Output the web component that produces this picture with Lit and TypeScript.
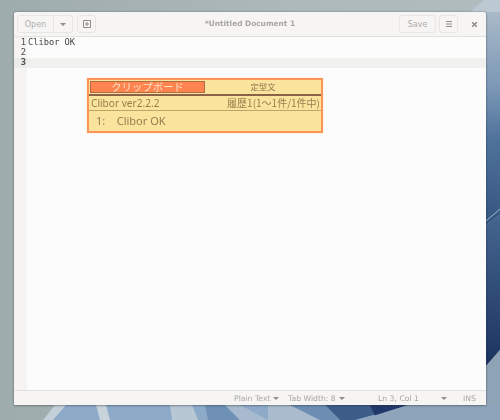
import { LitElement, html, css } from "lit";
import { customElement } from "lit/decorators.js";

@customElement("app-root")
export class AppRoot extends LitElement {
  static styles = css`
    :host { display: block; width: 500px; height: 420px; position: relative; overflow: hidden;
      font-family: "DejaVu Sans", sans-serif; background: #a3b1b2; }
    .wall { position: absolute; inset: 0; width: 500px; height: 420px; filter: blur(.6px); }
    .desk { position: relative; box-sizing: border-box; width: 500px; height: 420px; padding: 12px 14px 15px 14px; }
    .win { height: 393px; width: 472px; background: #f6f5f4; display: flex; flex-direction: column; position: relative;
      border-radius: 2px 2px 0 0; box-shadow: 0 0 2px rgba(40,50,60,.5), 0 1px 2px rgba(40,50,60,.3); }
    .head { height: 24px; flex: none; display: flex; align-items: center; padding: 0 3px; border-bottom: 1px solid #e3e1de; position: relative; filter: blur(.3px); }
    .btn { height: 18px; box-sizing: border-box; border: 1px solid #e8e6e3; border-radius: 3px; display: flex; align-items: center; justify-content: center;
      font-size: 8px; color: #adadab; background: #f6f5f4; }
    .open { width: 37px; border-radius: 3px 0 0 3px; }
    .drop { width: 19px; border-left: none; border-radius: 0 3px 3px 0; margin-right: 4px; }
    .add { width: 19px; }
    .tri { width: 0; height: 0; border-left: 3px solid transparent; border-right: 3px solid transparent; border-top: 3px solid #8e8e8c; }
    .title { position: absolute; left: 0; right: 0; text-align: center; font-size: 7.4px; line-height: 10px; font-weight: 700; color: #a6a6a4; }
    .spacer { flex: 1; }
    .save { width: 37px; margin-right: 3px; }
    .menu { width: 19px; }
    .close { width: 12px; margin: 0 3px 0 10px; display: flex; justify-content: center; }
    .body { flex: 1; display: flex; background: #fcfcfc; position: relative; min-height: 0; }
    .gutter { width: 13px; flex: none; background: #f5f4f3; box-sizing: border-box; padding-top: 1px; text-align: right; filter: blur(.2px); }
    .gutter div { height: 10px; font: 8.7px/9px "DejaVu Sans Mono", monospace; color: #4a4a4a; padding-right: 1px; }
    .gutter .cur { font-weight: 700; background: #ececea; }
    .text { flex: 1; padding-top: 1px; font: 8.7px/9px "DejaVu Sans Mono", monospace; color: #444; }
    .text div { height: 10px; padding-left: 1px; filter: blur(.2px); }
    .text .cur { background: #f0f0ef; filter: none; }
    .foot { height: 15px; box-sizing: border-box; flex: none; border-top: 1px solid #e3e1de; display: flex; align-items: center; font-size: 7.7px; color: #a6a6a4; position: relative; padding-left: 220px; filter: blur(.25px); }
    .foot .item { display: flex; align-items: center; gap: 3px; white-space: nowrap; }
    .clibor { position: absolute; left: 73px; top: 41px; width: 236px; height: 55px; box-sizing: border-box; border: 2px solid #fd9558; background: #fae39d;
      display: flex; flex-direction: column; font-family: "Noto Sans CJK JP", sans-serif; color: #94804f; box-shadow: 0 0 1px #fdc9a0; filter: blur(.3px); }
    .tabs { height: 14px; flex: none; display: flex; border-bottom: 2px solid #8a6248; box-sizing: content-box; }
    .tab { flex: 1; display: flex; align-items: center; justify-content: center; font-size: 8.4px; line-height: 1; color: #8c784f; padding-bottom: 2px; }
    .tab.on { flex: none; width: 115px; height: 12px; margin: 1px 0 0 1px; padding: 0; background: #ff8450; border: 1px solid #b06a44; box-sizing: border-box; color: #fbe3c4; font-size: 10.4px; }
    .info { height: 14px; flex: none; display: flex; justify-content: space-between; align-items: center; padding: 0 1px 0 2px; font-size: 10.1px; line-height: 1; border-bottom: 1px solid #bfa468; font-family: "Noto Sans", "Noto Sans CJK JP", sans-serif; }
    .info span:last-child { font-family: "Noto Sans CJK JP", sans-serif; font-size: 10px; }
    .row { flex: 1; padding: 0 0 1px 7px; display: flex; align-items: center; font-size: 11px; line-height: 1; font-family: "Noto Sans", sans-serif; white-space: pre; }
  `;

  render() {
    return html`
      <svg class="wall" viewBox="0 0 500 420">
        <defs>
          <linearGradient id="g" x1="0" y1="0" x2="1" y2="0">
            <stop offset="0" stop-color="#9facad" />
            <stop offset=".6" stop-color="#adb9ba" />
            <stop offset="1" stop-color="#b0bcbe" />
          </linearGradient>
          <linearGradient id="r" x1="0" y1="0" x2="0" y2="1">
            <stop offset="0" stop-color="#a9bac8" />
            <stop offset=".35" stop-color="#7c98b6" />
            <stop offset=".6" stop-color="#4f729b" />
            <stop offset="1" stop-color="#34557f" />
          </linearGradient>
          <linearGradient id="d" x1="0" y1="0" x2="0" y2="1">
            <stop offset="0" stop-color="#45658f" />
            <stop offset="1" stop-color="#1b345f" />
          </linearGradient>
        </defs>
        <rect width="500" height="420" fill="url(#g)" />
        <path d="M470 12 L484 0 H500 V12 Z" fill="#bcc8d2" />
        <path d="M486 12 H500 V215 L486 225 Z" fill="url(#r)" />
        <path d="M486 225 L500 215 V350 L486 366 Z" fill="url(#d)" />
        <path d="M486 366 L500 350 V420 H486 Z" fill="#8fa3b6" />
        <path d="M486 221 L500 209" stroke="#a7bbce" stroke-width="1" />
        <path d="M60 405 H500 V420 H50 Z" fill="#8dabc9" />
        <path d="M43 420 L55 405 H66 L53 420 Z" fill="#c3d0d9" />
        <path d="M96 405 H106 L110 420 H100 Z" fill="#c8d3dc" />
        <path d="M170 405 H192 L198 420 H172 Z" fill="#b7c7d4" />
        <path d="M205 405 H225 L240 420 H208 Z" fill="#6f91b5" />
        <path d="M225 405 H240 L268 420 H240 Z" fill="#a8bbce" />
        <path d="M268 405 H290 L320 420 H268 Z" fill="#a9bbcd" />
        <path d="M290 405 H325 L340 420 H320 Z" fill="#6d8eb2" />
        <path d="M325 405 H410 L355 420 H340 Z" fill="#3c5d88" />
        <path d="M370 405 H408 L375 416 Z" fill="#20396a" />
        <path d="M408 405 H500 V420 H360 Z" fill="#8ea4ba" />
      </svg>
      <div class="desk">
        <div class="win">
          <div class="head">
            <div class="btn open">Open</div>
            <div class="btn drop"><span class="tri"></span></div>
            <div class="btn add">
              <svg width="10" height="10" viewBox="0 0 10 10" fill="none" stroke="#8e8e8c" stroke-width="1">
                <path d="M1.5 1.5h7v7h-7z M5 3v4 M3 5h4" />
              </svg>
            </div>
            <div class="title">*Untitled Document 1</div>
            <div class="spacer"></div>
            <div class="btn save">Save</div>
            <div class="btn menu">
              <svg width="8" height="8" viewBox="0 0 8 8" stroke="#8e8e8c" stroke-width="1"><path d="M1 1.5h6M1 4h6M1 6.5h6" /></svg>
            </div>
            <div class="close">
              <svg width="7" height="7" viewBox="0 0 7 7" stroke="#858583" stroke-width="1.3"><path d="M1.2 1.2l4.6 4.6M5.8 1.2L1.2 5.8" /></svg>
            </div>
          </div>
          <div class="body">
            <div class="gutter"><div>1</div><div>2</div><div class="cur">3</div></div>
            <div class="text"><div>Clibor OK</div><div></div><div class="cur"></div></div>
            <div class="clibor">
              <div class="tabs">
                <div class="tab on">クリップボード</div>
                <div class="tab">定型文</div>
              </div>
              <div class="info"><span>Clibor ver2.2.2</span><span>履歴1(1～1件/1件中)</span></div>
              <div class="row">1:    Clibor OK</div>
            </div>
          </div>
          <div class="foot">
            <div class="item" style="width:54px">Plain Text <span class="tri"></span></div>
            <div class="item" style="width:90px">Tab Width: 8 <span class="tri"></span></div>
            <div class="item" style="width:63px">Ln 3, Col 1</div>
            <div class="tri" style="margin-right:16px"></div>
            <div class="item">INS</div>
          </div>
        </div>
      </div>
    `;
  }
}
